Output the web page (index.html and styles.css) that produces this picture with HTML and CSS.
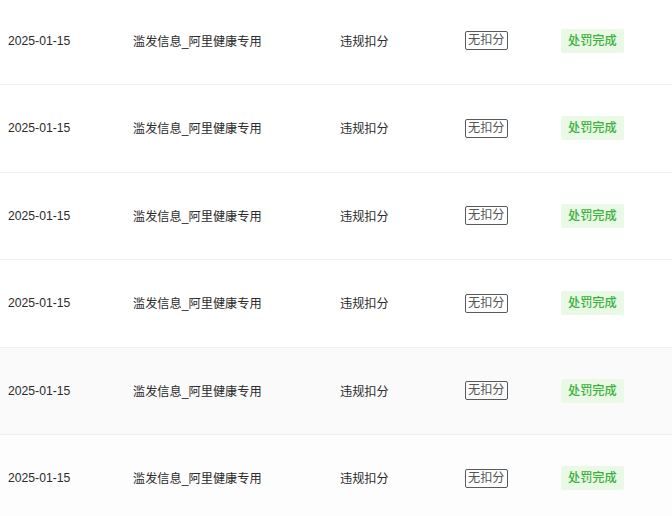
FILE: index.html
```html
<!DOCTYPE html>
<html lang="zh-CN">
<head>
<meta charset="utf-8">
<link rel="stylesheet" href="styles.css">
</head>
<body>
<div class="table">
  <div class="row">
    <div class="cell date">2025-01-15</div>
    <div class="cell">滥发信息_阿里健康专用</div>
    <div class="cell">违规扣分</div>
    <div class="cell"><span class="tag-plain">无扣分</span></div>
    <div class="cell"><span class="tag-green">处罚完成</span></div>
  </div>
  <div class="row">
    <div class="cell date">2025-01-15</div>
    <div class="cell">滥发信息_阿里健康专用</div>
    <div class="cell">违规扣分</div>
    <div class="cell"><span class="tag-plain">无扣分</span></div>
    <div class="cell"><span class="tag-green">处罚完成</span></div>
  </div>
  <div class="row">
    <div class="cell date">2025-01-15</div>
    <div class="cell">滥发信息_阿里健康专用</div>
    <div class="cell">违规扣分</div>
    <div class="cell"><span class="tag-plain">无扣分</span></div>
    <div class="cell"><span class="tag-green">处罚完成</span></div>
  </div>
  <div class="row">
    <div class="cell date">2025-01-15</div>
    <div class="cell">滥发信息_阿里健康专用</div>
    <div class="cell">违规扣分</div>
    <div class="cell"><span class="tag-plain">无扣分</span></div>
    <div class="cell"><span class="tag-green">处罚完成</span></div>
  </div>
  <div class="row hover">
    <div class="cell date">2025-01-15</div>
    <div class="cell">滥发信息_阿里健康专用</div>
    <div class="cell">违规扣分</div>
    <div class="cell"><span class="tag-plain">无扣分</span></div>
    <div class="cell"><span class="tag-green">处罚完成</span></div>
  </div>
  <div class="row last">
    <div class="cell date">2025-01-15</div>
    <div class="cell">滥发信息_阿里健康专用</div>
    <div class="cell">违规扣分</div>
    <div class="cell"><span class="tag-plain">无扣分</span></div>
    <div class="cell"><span class="tag-green">处罚完成</span></div>
  </div>
</div>
</body>
</html>
```
FILE: styles.css
```css
html, body {
  margin: 0;
  padding: 0;
  background: #ffffff;
  overflow: hidden;
}
body {
  font-family: "Liberation Sans", Arial, "Noto Sans CJK SC", sans-serif;
  font-size: 12.2px;
  color: #2b2b2b;
}
.table {
  margin-top: -2.5px;
}
.row {
  display: grid;
  grid-template-columns: 125px 207px 125px 96px 1fr;
  align-items: center;
  height: 87.5px;
  box-sizing: border-box;
  padding-left: 8px;
  border-bottom: 1px solid #f0f0f0;
}
.row.hover {
  background: #fafafa;
}
.row.last {
  background: #fdfdfd;
}
.cell {
  white-space: nowrap;
}
.tag-plain {
  display: inline-block;
  border: 1px solid #5a5a5a;
  border-radius: 2px;
  padding: 0 2px;
  line-height: 17px;
  color: #555555;
}
.tag-green {
  display: inline-block;
  background: #e9f9e6;
  color: #3cb13c;
  font-weight: 500;
  padding: 0 7px;
  line-height: 24px;
  border-radius: 2px;
}
```
